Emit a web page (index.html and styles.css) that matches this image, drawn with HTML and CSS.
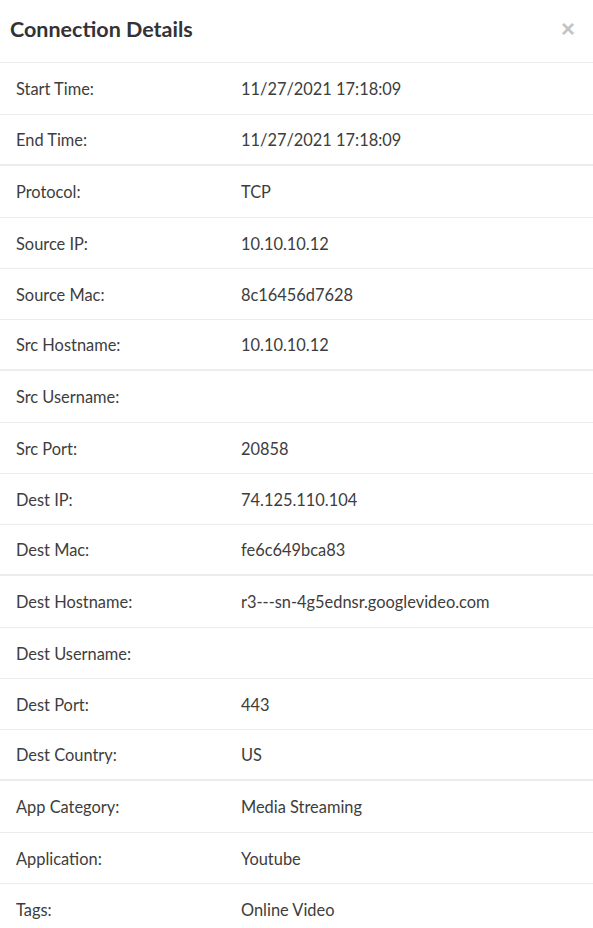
FILE: index.html
```html
<!DOCTYPE html>
<html>
<head>
<meta charset="utf-8">
<link rel="stylesheet" href="styles.css">
</head>
<body>
<div class="modal">
  <div class="modal-header">
    <h4 class="modal-title">Connection Details</h4>
    <span class="close">&times;</span>
  </div>
  <table class="details">
    <tbody>
      <tr><td class="k">Start Time:</td><td class="v">11/27/2021 17:18:09</td></tr>
      <tr><td class="k">End Time:</td><td class="v">11/27/2021 17:18:09</td></tr>
    </tbody>
    <tbody>
      <tr><td class="k">Protocol:</td><td class="v">TCP</td></tr>
      <tr><td class="k">Source IP:</td><td class="v">10.10.10.12</td></tr>
      <tr><td class="k">Source Mac:</td><td class="v">8c16456d7628</td></tr>
      <tr><td class="k">Src Hostname:</td><td class="v">10.10.10.12</td></tr>
    </tbody>
    <tbody>
      <tr><td class="k">Src Username:</td><td class="v"></td></tr>
      <tr><td class="k">Src Port:</td><td class="v">20858</td></tr>
      <tr><td class="k">Dest IP:</td><td class="v">74.125.110.104</td></tr>
      <tr><td class="k">Dest Mac:</td><td class="v">fe6c649bca83</td></tr>
    </tbody>
    <tbody>
      <tr><td class="k">Dest Hostname:</td><td class="v">r3---sn-4g5ednsr.googlevideo.com</td></tr>
      <tr><td class="k">Dest Username:</td><td class="v"></td></tr>
      <tr><td class="k">Dest Port:</td><td class="v">443</td></tr>
      <tr><td class="k">Dest Country:</td><td class="v">US</td></tr>
    </tbody>
    <tbody>
      <tr><td class="k">App Category:</td><td class="v">Media Streaming</td></tr>
      <tr><td class="k">Application:</td><td class="v">Youtube</td></tr>
      <tr><td class="k">Tags:</td><td class="v">Online Video</td></tr>
    </tbody>
  </table>
</div>
</body>
</html>
```
FILE: styles.css
```css
html, body {
  margin: 0;
  padding: 0;
  background: #fff;
}
body {
  font-family: Lato, "Liberation Sans", sans-serif;
  color: #3d3d3d;
}
.modal {
  width: 593px;
}
.modal-header {
  display: flex;
  align-items: center;
  justify-content: space-between;
  height: 63px;
  padding: 0 18px 4px 10px;
  box-sizing: border-box;
  border-bottom: 1px solid #ececec;
}
.modal-title {
  margin: 0;
  font-size: 21.5px;
  font-weight: 700;
  color: #333;
}
.close {
  font-size: 24px;
  line-height: 1;
  color: #c4c4c4;
  font-family: "Liberation Sans", sans-serif;
  font-weight: 700;
}
.details {
  width: 100%;
  border-collapse: collapse;
  font-size: 16.4px;
}
.details td {
  height: 51px;
  padding: 2px 15px 0 16px;
  box-sizing: border-box;
  border-top: 1px solid #ececec;
  vertical-align: middle;
  line-height: 24px;
}
.details tbody:first-child tr:first-child td {
  border-top: none;
}
.details tbody + tbody tr:first-child td {
  height: 52px;
  border-top: 2px solid #ececec;
}
.details td.k {
  width: 241px;
}
.details td.v {
  padding-left: 0;
}
```
